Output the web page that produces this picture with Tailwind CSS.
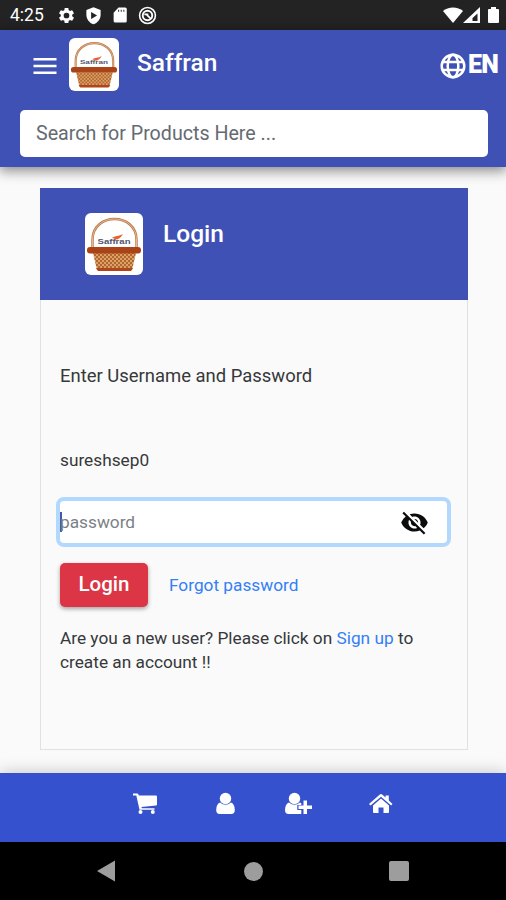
<!DOCTYPE html>
<html lang="en">
<head>
<meta charset="utf-8">
<meta name="viewport" content="width=device-width, initial-scale=1">
<title>Saffran</title>
<script src="https://cdn.jsdelivr.net/npm/@tailwindcss/browser@4"></script>
</head>
<body class="flex h-[900px] w-[506px] flex-col overflow-hidden bg-[#fafafa] font-[Roboto,sans-serif] text-[#36383b]">

<!-- basket logo shared by the toolbar and the card -->
<svg class="h-0 w-0 shrink-0">
  <defs>
    <pattern id="weave" width="4" height="4" patternUnits="userSpaceOnUse">
      <rect width="4" height="4" fill="#dfa063"/>
      <path d="M0 0l4 4M4 0L0 4" stroke="#a8602c" stroke-width=".9"/>
    </pattern>
    <symbol id="basket" viewBox="0 0 58 62">
      <path d="M7.500 36V27C7.500 -1 51.500 -1 51.500 27V36" fill="none" stroke="#bd7440" stroke-width="2.400"/>
      <path d="M7.500 36V27C7.500 -1 51.500 -1 51.500 27V36" fill="none" stroke="#e8c3a2" stroke-width=".9"/>
      <path d="M8 40H51L47 57H12Z" fill="url(#weave)"/>
      <path d="M11 55H48L46 58H13Z" fill="#b0441c"/>
      <rect x="2" y="34" width="54" height="6.500" rx="3" fill="#aa4318"/>
      <text x="12.500" y="30.500" font-size="7" font-weight="700" textLength="33" lengthAdjust="spacingAndGlyphs" font-family="Liberation Sans, sans-serif" fill="#55556c">Saffran</text>
      <path d="M27 25c3-2.500 7-1.500 11-4-2 3.500-4 4.500-6 5.500z" fill="#e9622c"/>
    </symbol>
  </defs>
</svg>

<div class="flex h-[30px] shrink-0 items-center bg-[#232323] pr-[7px] pl-[10px] text-white">
  <span class="w-[47px] text-[17.500px] leading-[30px]">4:25</span>
  <svg class="h-[19px] w-[19px]" viewBox="0 0 24 24" fill="currentColor"><path d="M19.140 12.940c.04-.3.060-.61.060-.94s-.02-.64-.07-.94l2.030-1.580a.49.490 0 0 0 .12-.61l-1.920-3.320a.49.490 0 0 0-.59-.22l-2.390.96a7 7 0 0 0-1.620-.94l-.36-2.540a.48.480 0 0 0-.48-.41h-3.840a.48.480 0 0 0-.47.410l-.36 2.540c-.59.240-1.130.57-1.620.94l-2.390-.96a.49.490 0 0 0-.59.220L2.740 8.870a.48.480 0 0 0 .12.610l2.030 1.580a6.500 6.500 0 0 0 0 1.880l-2.030 1.580a.49.490 0 0 0-.12.610l1.920 3.320c.12.220.37.290.59.220l2.390-.96c.5.380 1.030.7 1.620.94l.36 2.540c.05.240.24.410.48.410h3.840c.24 0 .44-.17.470-.41l.36-2.540a7 7 0 0 0 1.620-.94l2.390.96c.22.080.47 0 .59-.22l1.920-3.320a.48.480 0 0 0-.12-.61zM12 15.600a3.600 3.600 0 1 1 0-7.200 3.600 3.600 0 0 1 0 7.200z"/></svg>
  <svg class="ml-[8px] h-[19px] w-[19px]" viewBox="0 0 24 24" fill="currentColor" fill-rule="evenodd"><path d="M12 1.500L3 5v6c0 5.500 3.800 10.500 9 12 5.200-1.500 9-6.500 9-12V5zM9 7.500v9l7.500-4.500z"/></svg>
  <svg class="ml-[8px] h-[18px] w-[18px]" viewBox="0 0 24 24" fill="currentColor" fill-rule="evenodd"><path d="M19 2h-9L3.500 9v11c0 1.100.9 2 2 2H19a2 2 0 0 0 2-2V4a2 2 0 0 0-2-2zM9.500 5h1.300v2.500H9.500zM13 5h1.300v2.500H13zM16.500 5h1.300v2.500h-1.300z"/></svg>
  <svg class="ml-[9px] h-[19px] w-[19px]" viewBox="0 0 24 24" fill="none" stroke="currentColor" stroke-width="2"><circle cx="12" cy="12" r="10"/><circle cx="12" cy="12" r="6" stroke-width="2.400"/><path d="M8 10.500h5M10 10l6 6" stroke-width="2.200"/></svg>
  <svg class="ml-auto h-[18px] w-[20px]" viewBox="0 0 20 18" fill="currentColor"><path d="M0 5C5 .3 15 .3 20 5L10 17z"/></svg>
  <svg class="h-[18px] w-[17px]" viewBox="0 0 17 18" fill="currentColor" fill-rule="evenodd"><path d="M0 17L17 1v16zM9.500 15h5V7.500L9.500 12z"/></svg>
  <svg class="ml-[8px] h-[18px] w-[11px]" viewBox="0 0 11 18" fill="currentColor"><path d="M3 1h5v2h2q1 0 1 1v12q0 1-1 1H1q-1 0-1-1V4q0-1 1-1h2z"/></svg>
</div>

<header class="h-[137px] shrink-0 bg-[#3f51b5] shadow-[0_3px_12px_1px_rgba(0,0,0,0.45)]">
  <div class="flex h-[80px] items-start pr-[8px] pl-[33px] text-white">
    <svg class="mt-[27px] h-[18px] w-[24px]" viewBox="0 0 24 18" fill="currentColor"><path d="M.5 1h23v2.500H.5zM.5 7.800h23v2.500H.5zM.5 14.500h23v2.500H.5z"/></svg>
    <div class="mt-[8px] ml-[12px] h-[53px] w-[50px] rounded-[6px] bg-white"><svg class="h-full w-full"><use href="#basket"/></svg></div>
    <h1 class="mt-[18px] ml-[18px] text-[24.500px] leading-[30px] font-medium">Saffran</h1>
    <div class="ml-auto flex items-start">
      <svg class="mt-[23px] h-[26px] w-[26px]" viewBox="0 0 26 26" fill="none" stroke="currentColor" stroke-width="2.500"><circle cx="13" cy="13" r="11.300"/><ellipse cx="13" cy="13" rx="5.300" ry="11.300"/><path d="M2.500 9h21M2.500 17h21"/></svg>
      <span class="mt-[20px] ml-[2px] text-[25px] leading-[30px] font-black tracking-[-0.8px]">EN</span>
    </div>
  </div>
  <div class="mr-[18px] ml-[20px] flex h-[47px] items-center rounded-[5px] bg-white pl-[16px] text-[19.650px] text-[#646b72]">Search for Products Here ...</div>
</header>

<main class="flex-1 pt-[21px] pr-[38px] pl-[40px]">
  <section class="h-[562px] border border-[#e1e1e3]">
    <div class="-mx-px -mt-px flex h-[112px] items-start bg-[#3f51b5] pl-[45px] text-white">
      <div class="mt-[25px] h-[62px] w-[58px] rounded-[6px] bg-white"><svg class="h-full w-full"><use href="#basket"/></svg></div>
      <h2 class="mt-[31px] ml-[20px] text-[24.500px] leading-[30px] font-medium">Login</h2>
    </div>
    <div class="px-[19px] text-[17.250px] leading-[24px]">
      <p class="mt-[64px] text-[18.450px]">Enter Username and Password</p>
      <p class="mt-[60px]">sureshsep0</p>
      <div class="mt-[25px] -mr-[3px] -ml-[4px] flex h-[50px] items-center rounded-[8px] border-4 border-[#b3d8fd] bg-white pr-[18px] text-[#7c8187]">
        <span class="h-[20px] w-[2px] bg-[#4558a8]"></span>
        <span class="-ml-[2px]">password</span>
        <svg class="ml-auto h-[29px] w-[29px]" viewBox="0 0 24 24" fill="#0c0c0c"><path d="M12 7c2.760 0 5 2.240 5 5 0 .65-.13 1.260-.36 1.830l2.920 2.920c1.510-1.260 2.700-2.890 3.430-4.750-1.730-4.390-6-7.500-11-7.500-1.400 0-2.740.25-3.980.7l2.160 2.160C10.740 7.130 11.350 7 12 7zM2 4.270l2.280 2.280.46.460A11.800 11.800 0 0 0 1 12c1.730 4.390 6 7.500 11 7.500 1.550 0 3.030-.3 4.380-.84l.42.420L19.730 22 21 20.730 3.270 3zM7.530 9.800l1.550 1.550c-.05.210-.08.430-.08.650 0 1.660 1.340 3 3 3 .22 0 .44-.03.650-.08l1.550 1.550c-.67.330-1.410.53-2.200.53-2.760 0-5-2.240-5-5 0-.79.200-1.530.53-2.200zm4.310-.78l3.150 3.150.02-.16c0-1.660-1.340-3-3-3z"/></svg>
      </div>
      <div class="mt-[16px] flex h-[44px] items-center">
        <button class="h-[44px] w-[88px] rounded-[5px] bg-[#dc3545] pb-[2px] text-[20.500px] font-medium text-white shadow-[0_2px_4px_rgba(0,0,0,0.35)]">Login</button>
        <a class="ml-[21px] text-[#347ff5]">Forgot password</a>
      </div>
      <p class="mt-[19px]">Are you a new user? Please click on <a class="text-[#347ff5]">Sign up</a> to<br>create an account !!</p>
    </div>
  </section>
</main>

<nav class="flex h-[69px] shrink-0 bg-[#3651cd] pt-[18px] pl-[132px] text-white shadow-[0_-2px_14px_rgba(0,0,0,0.18)]">
  <svg class="h-[26px] w-[26px]" viewBox="0 0 26 26" fill="currentColor"><path d="M1 2.500h4.200q1 0 1.300 1l.3 1H24q1 0 1 1v8q0 .9-1 1L9.500 16l.3 1.200H22.500v1.600H7.500L4.300 4.500H1z"/><circle cx="8.500" cy="21" r="2"/><circle cx="20.800" cy="21" r="2"/></svg>
  <svg class="ml-[57px] h-[26px] w-[21px]" viewBox="0 0 21 26" fill="currentColor"><circle cx="10.500" cy="7.500" r="5.700"/><path d="M5 11.500q5.500 4.500 11 0 3.800 1.500 3.800 7.500 0 4-3.500 4H4.700q-3.500 0-3.500-4 0-6 3.800-7.500z"/></svg>
  <svg class="ml-[46px] h-[26px] w-[32px]" viewBox="0 0 32 26" fill="currentColor"><circle cx="12.500" cy="7.500" r="5.700"/><path d="M7 11.500q5.500 4.500 11 0l1.300.7v1.800h-4v5h4v4H6.500Q3 23 3 19q0-6 4-7.500z"/><path d="M21.500 9.500h3.500v5h5V18h-5v5h-3.500v-5h-5v-3.500h5z"/></svg>
  <svg class="ml-[54px] h-[26px] w-[26px]" viewBox="0 0 26 26" fill="currentColor"><path d="M1 13L11.800 3.500q1.200-1 2.400 0L17.500 6.500V4.500h3.300v5L24.500 13l-1.300 1.500L13 5.800 2.500 14.500z"/><path d="M13 7.400l8 7V21q0 1-1 1h-4.500v-5.500h-5V22H6q-1 0-1-1v-6.600z"/></svg>
</nav>

<div class="flex h-[58px] shrink-0 items-center bg-black pl-[97px] text-[#9d9d9d]">
  <svg class="h-[22px] w-[18px]" viewBox="0 0 18 22" fill="currentColor"><path d="M0 11L18 .5v21z"/></svg>
  <span class="ml-[129px] h-[19px] w-[19px] rounded-full bg-current"></span>
  <span class="ml-[126px] h-[20px] w-[20px] rounded-[2px] bg-current"></span>
</div>
</body>
</html>
